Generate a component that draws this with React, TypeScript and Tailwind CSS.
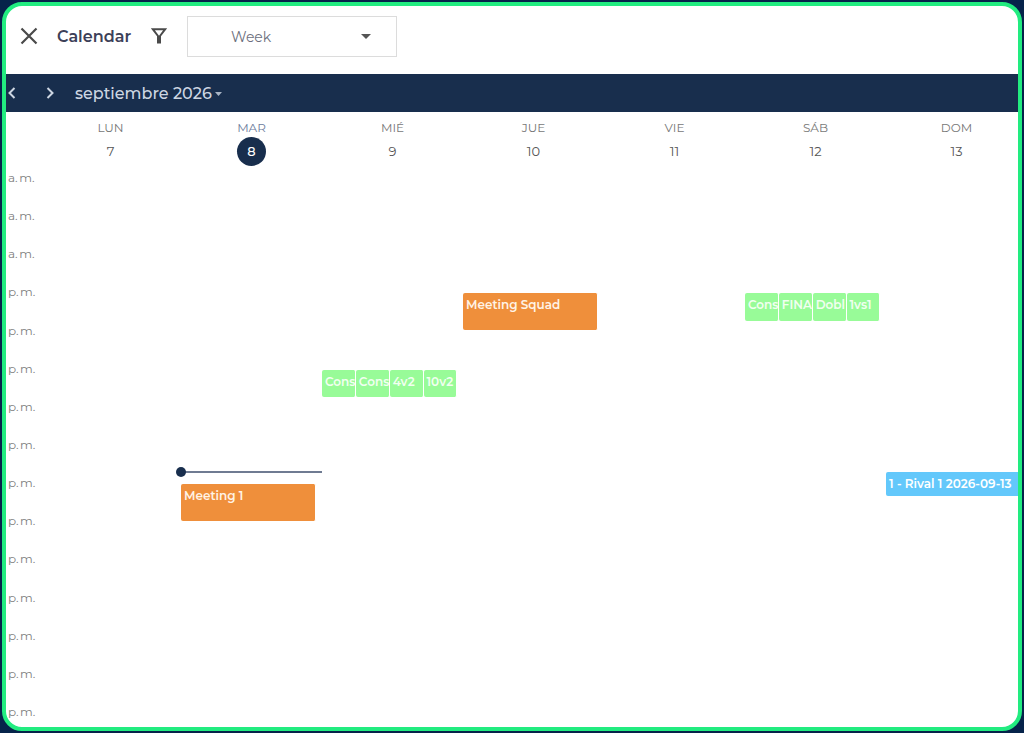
import { useState } from "react";

type CalendarEvent = {
  title: string;
  day: number;
  start: number;
  length: number;
  slot?: number;
  slots?: number;
  kind: "meeting" | "training" | "match";
};

const ROWS = 15;

const days = [
  { name: "LUN", date: 7 },
  { name: "MAR", date: 8, today: true },
  { name: "MIÉ", date: 9 },
  { name: "JUE", date: 10 },
  { name: "VIE", date: 11 },
  { name: "SÁB", date: 12 },
  { name: "DOM", date: 13 },
];

const hours = Array.from({ length: ROWS }, (_, i) => (i < 3 ? "a.\u2009m." : "p.\u2009m."));

const events: CalendarEvent[] = [
  { title: "Meeting 1", day: 1, start: 8.02, length: 0.97, kind: "meeting" },
  { title: "Cons", day: 2, start: 5.03, length: 0.72, slot: 0, slots: 4, kind: "training" },
  { title: "Cons", day: 2, start: 5.03, length: 0.72, slot: 1, slots: 4, kind: "training" },
  { title: "4v2", day: 2, start: 5.03, length: 0.72, slot: 2, slots: 4, kind: "training" },
  { title: "10v2", day: 2, start: 5.03, length: 0.72, slot: 3, slots: 4, kind: "training" },
  { title: "Meeting Squad", day: 3, start: 3.02, length: 0.97, kind: "meeting" },
  { title: "Cons", day: 5, start: 3.02, length: 0.72, slot: 0, slots: 4, kind: "training" },
  { title: "FINA", day: 5, start: 3.02, length: 0.72, slot: 1, slots: 4, kind: "training" },
  { title: "Dobl", day: 5, start: 3.02, length: 0.72, slot: 2, slots: 4, kind: "training" },
  { title: "1vs1", day: 5, start: 3.02, length: 0.72, slot: 3, slots: 4, kind: "training" },
  { title: "1 - Rival 1 2026-09-13", day: 6, start: 7.7, length: 0.64, kind: "match" },
];

const kindClass = {
  meeting: "bg-[#ef8f3b] text-[#fff3e6]",
  training: "bg-[#98fb98] text-[#f1fff0]",
  match: "bg-[#63c8fb] text-white",
};

const NOW = 7.68;

function rowOffset(hour: number) {
  return `${((hour + 0.5) / ROWS) * 100}%`;
}

function EventBlock({ event }: { event: CalendarEvent }) {
  const slots = event.slots ?? 1;
  const slot = event.slot ?? 0;
  return (
    <button
      type="button"
      className={`absolute flex items-start justify-start overflow-hidden rounded-xs border-r border-white pt-1 pl-[3px] text-left text-xs leading-4 font-semibold whitespace-nowrap ${kindClass[event.kind]}`}
      style={{
        top: rowOffset(event.start),
        height: `${(event.length / ROWS) * 100}%`,
        left: `${(slot / slots) * 100}%`,
        width: `${100 / slots}%`,
      }}
    >
      {event.title}
    </button>
  );
}

export default function App() {
  const [view, setView] = useState("Week");

  return (
    <div className="flex min-h-screen bg-[#06234a] p-0.5 font-['Montserrat','Inter',sans-serif]">
      <div className="flex min-w-0 flex-1 flex-col overflow-hidden rounded-[20px] border-4 border-[#22ec80] bg-white">
        <header className="flex h-[68px] items-start pt-[10px] pl-[14px]">
          <button type="button" aria-label="Close" className="mt-[11px] text-[#4a4a4a]">
            <svg className="size-[18px]" viewBox="0 0 18 18" fill="none" stroke="currentColor" strokeWidth="2.2">
              <path d="M1.5 1.5 16.5 16.5M16.5 1.5 1.5 16.5" />
            </svg>
          </button>
          <h1 className="mt-[9px] ml-[19px] text-base leading-6 font-semibold text-[#3c4058]">Calendar</h1>
          <button type="button" aria-label="Filter" className="mt-[11px] ml-5 text-[#4a4a4a]">
            <svg className="h-[18px] w-4" viewBox="0 0 16 18" fill="none" stroke="currentColor" strokeWidth="2">
              <path d="M1.8 2.2H14.2L9 9V15.4H7V9Z" />
            </svg>
          </button>
          <div className="relative ml-5">
            <select
              aria-label="View"
              value={view}
              onChange={(e) => setView(e.target.value)}
              className="h-[41px] w-[210px] appearance-none border border-[#dcdcdc] bg-white pl-[43px] text-sm text-[#6c6f7d]"
            >
              <option>Week</option>
            </select>
            <svg className="pointer-events-none absolute top-[18px] right-[26px] h-[5px] w-[10px]" viewBox="0 0 10 5" fill="#555">
              <path d="M0 0H10L5 5Z" />
            </svg>
          </div>
        </header>

        <nav className="flex h-[38px] items-center bg-[#182e4d] text-[#cdd6e2]">
          <button type="button" aria-label="Previous week" className="pl-0.5">
            <svg className="h-3 w-2" viewBox="0 0 8 12" fill="none" stroke="currentColor" strokeWidth="2">
              <path d="M6.5 1 1.5 6 6.5 11" />
            </svg>
          </button>
          <button type="button" aria-label="Next week" className="ml-6 pl-[6px]">
            <svg className="h-3 w-2" viewBox="0 0 8 12" fill="none" stroke="currentColor" strokeWidth="2">
              <path d="M1.5 1 6.5 6 1.5 11" />
            </svg>
          </button>
          <button type="button" className="ml-[21px] flex items-center gap-[3px] pt-0.5 text-base leading-6 font-medium">
            septiembre 2026
            <svg className="h-1 w-[7px]" viewBox="0 0 7 4" fill="currentColor" fillOpacity="0.8">
              <path d="M0 0H7L3.5 4Z" />
            </svg>
          </button>
        </nav>

        <div className="flex w-[calc(100%+9px)] pl-[34px]">
          <div className="-mb-[7px] grid h-[54px] flex-1 grid-cols-7">
            {days.map((day) => (
              <div key={day.name} className="flex flex-col items-center pt-2">
                <span className={`text-xs leading-4 ${day.today ? "text-[#6c7c9c]" : "text-[#777]"}`}>{day.name}</span>
                <span
                  className={`mt-px flex size-[29px] items-center justify-center rounded-full text-[13px] ${
                    day.today ? "bg-[#182e4d] font-medium text-white" : "text-[#555]"
                  }`}
                >
                  {day.date}
                </span>
              </div>
            ))}
          </div>
        </div>

        <main className="flex min-h-[568px] flex-1">
          <div className="-mb-1 flex w-[calc(100%+9px)] shrink-0">
            <div className="grid w-[34px] shrink-0 auto-rows-fr text-xs leading-4 text-[#808080]">
              {hours.map((label, i) => (
                <span key={i} className="flex items-center pl-0.5 whitespace-nowrap">
                  {label}
                </span>
              ))}
            </div>
            <div className="grid min-w-0 flex-1 grid-cols-7">
              {days.map((day, index) => (
                <section key={day.name} aria-label={`${day.name} ${day.date}`} className="relative">
                  <div className="absolute inset-y-0 left-0 w-[96%]">
                    {events
                      .filter((event) => event.day === index)
                      .map((event, i) => (
                        <EventBlock key={i} event={event} />
                      ))}
                  </div>
                  {day.today && (
                    <div className="absolute inset-x-0 h-0.5 bg-[#6f7b92]" style={{ top: rowOffset(NOW) }}>
                      <span className="absolute -top-1 -left-[5px] size-[10px] rounded-full bg-[#182e4d]" />
                    </div>
                  )}
                </section>
              ))}
            </div>
          </div>
        </main>
      </div>
    </div>
  );
}
